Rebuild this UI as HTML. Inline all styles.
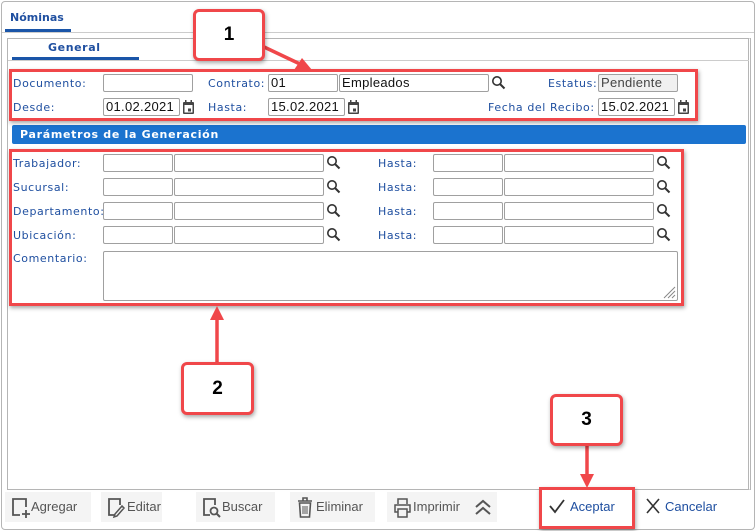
<!DOCTYPE html>
<html><head><meta charset="utf-8"><style>
*{margin:0;padding:0;box-sizing:border-box}
body{width:756px;height:531px;background:#fff;position:relative;overflow:hidden;font-family:"DejaVu Sans","Liberation Sans",sans-serif}
.a{position:absolute}
.l{position:absolute;font-size:11px;color:#1f4fa0;letter-spacing:0.6px;white-space:nowrap;line-height:13px}
.i{position:absolute;border:1px solid #a0a0a0;border-radius:2px;background:#fff;height:18px;font-size:13px;font-family:"Liberation Sans",sans-serif;line-height:16px;padding-left:2px;color:#111;letter-spacing:0.3px}
.r{position:absolute;border:3px solid #f0474a;box-shadow:1px 2px 4px rgba(0,0,0,.35)}
.c{position:absolute;border:3px solid #f0474a;border-radius:6px;background:#fff;box-shadow:1px 2px 4px rgba(0,0,0,.35);font:bold 19px "Liberation Sans",sans-serif;text-align:center;color:#000}
.btn{position:absolute;top:492px;height:30px;background:#f4f4f4;font:13px "Liberation Sans",sans-serif;color:#555;line-height:30px}
.btn svg{position:absolute;left:6px;top:5px}
.btn span{position:absolute;left:26px}
</style></head><body>
<div class="a" style="left:1px;top:1px;width:754px;height:529px;border:1px solid #b5b5b5;border-radius:4px"></div>
<div class="a" style="left:10px;top:11px;font:bold 11px 'DejaVu Sans',sans-serif;color:#1f4fa0">Nóminas</div>
<div class="a" style="left:5px;top:29px;width:66px;height:3px;background:#1a55a8"></div>
<div class="a" style="left:2px;top:32px;width:752px;height:1px;background:#ccc"></div>
<div class="a" style="left:7px;top:38px;width:744px;height:452px;border:1px solid #b5b5b5;border-right:3px double #b5b5b5"></div>
<div class="a" style="left:48px;top:41px;font:bold 11px 'DejaVu Sans',sans-serif;color:#1f4fa0;letter-spacing:0.6px">General</div>
<div class="a" style="left:12px;top:57px;width:127px;height:3px;background:#1a55a8"></div>
<div class="a" style="left:8px;top:60px;width:741px;height:1px;background:#ccc"></div>

<!-- row1 -->
<div class="l" style="left:13px;top:77px">Documento:</div>
<div class="i" style="left:103px;top:74px;width:90px"></div>
<div class="l" style="left:208px;top:77px">Contrato:</div>
<div class="i" style="left:268px;top:74px;width:70px">01</div>
<div class="i" style="left:339px;top:74px;width:150px">Empleados</div>
<svg class="a" style="left:491px;top:75px" width="16" height="16" viewBox="0 0 16 16"><circle cx="6" cy="6" r="4.2" fill="none" stroke="#333" stroke-width="1.6"/><path d="M9 9l4.5 4.5" stroke="#333" stroke-width="2"/></svg>
<div class="l" style="left:548px;top:77px">Estatus:</div>
<div class="i" style="left:598px;top:74px;width:80px;background:#f0f0f0;color:#444">Pendiente</div>
<!-- row2 -->
<div class="l" style="left:13px;top:101px">Desde:</div>
<div class="i" style="left:103px;top:98px;width:77px">01.02.2021</div>
<div class="l" style="left:208px;top:101px">Hasta:</div>
<div class="i" style="left:268px;top:98px;width:77px">15.02.2021</div>
<div class="l" style="left:488px;top:101px">Fecha del Recibo:</div>
<div class="i" style="left:598px;top:98px;width:77px">15.02.2021</div>
<svg class="a" style="left:182px;top:100px" width="13" height="15"><rect x="1" y="2" width="11" height="12" rx="1" fill="#444"/><rect x="2.5" y="5" width="8" height="7.5" fill="#fff"/><rect x="6" y="8.5" width="3" height="3" fill="#444"/><rect x="3" y="0" width="1.5" height="3" fill="#444"/><rect x="8.5" y="0" width="1.5" height="3" fill="#444"/></svg>
<svg class="a" style="left:347px;top:100px" width="13" height="15"><rect x="1" y="2" width="11" height="12" rx="1" fill="#444"/><rect x="2.5" y="5" width="8" height="7.5" fill="#fff"/><rect x="6" y="8.5" width="3" height="3" fill="#444"/><rect x="3" y="0" width="1.5" height="3" fill="#444"/><rect x="8.5" y="0" width="1.5" height="3" fill="#444"/></svg>
<svg class="a" style="left:677px;top:100px" width="13" height="15"><rect x="1" y="2" width="11" height="12" rx="1" fill="#444"/><rect x="2.5" y="5" width="8" height="7.5" fill="#fff"/><rect x="6" y="8.5" width="3" height="3" fill="#444"/><rect x="3" y="0" width="1.5" height="3" fill="#444"/><rect x="8.5" y="0" width="1.5" height="3" fill="#444"/></svg>

<div class="a" style="left:12px;top:125px;width:734px;height:19px;background:#1b73cf;border-radius:2px"></div>
<div class="a" style="left:20px;top:128px;font:bold 11px 'DejaVu Sans',sans-serif;color:#fff;letter-spacing:0.7px">Parámetros de la Generación</div>

<!-- rows -->
<div class="l" style="left:13px;top:157px">Trabajador:</div>
<div class="l" style="left:13px;top:181px">Sucursal:</div>
<div class="l" style="left:13px;top:205px">Departamento:</div>
<div class="l" style="left:13px;top:229px">Ubicación:</div>
<div class="l" style="left:13px;top:252px">Comentario:</div>
<div class="l" style="left:378px;top:157px">Hasta:</div>
<div class="l" style="left:378px;top:181px">Hasta:</div>
<div class="l" style="left:378px;top:205px">Hasta:</div>
<div class="l" style="left:378px;top:229px">Hasta:</div>

<div class="i" style="left:103px;top:154px;width:70px"></div><div class="i" style="left:174px;top:154px;width:150px"></div>
<div class="i" style="left:103px;top:178px;width:70px"></div><div class="i" style="left:174px;top:178px;width:150px"></div>
<div class="i" style="left:103px;top:202px;width:70px"></div><div class="i" style="left:174px;top:202px;width:150px"></div>
<div class="i" style="left:103px;top:226px;width:70px"></div><div class="i" style="left:174px;top:226px;width:150px"></div>
<div class="i" style="left:433px;top:154px;width:70px"></div><div class="i" style="left:504px;top:154px;width:150px"></div>
<div class="i" style="left:433px;top:178px;width:70px"></div><div class="i" style="left:504px;top:178px;width:150px"></div>
<div class="i" style="left:433px;top:202px;width:70px"></div><div class="i" style="left:504px;top:202px;width:150px"></div>
<div class="i" style="left:433px;top:226px;width:70px"></div><div class="i" style="left:504px;top:226px;width:150px"></div>
<svg class="a" style="left:326px;top:155px" width="16" height="16"><circle cx="6" cy="6" r="4.2" fill="none" stroke="#333" stroke-width="1.6"/><path d="M9 9l4.5 4.5" stroke="#333" stroke-width="2"/></svg>
<svg class="a" style="left:326px;top:179px" width="16" height="16"><circle cx="6" cy="6" r="4.2" fill="none" stroke="#333" stroke-width="1.6"/><path d="M9 9l4.5 4.5" stroke="#333" stroke-width="2"/></svg>
<svg class="a" style="left:326px;top:203px" width="16" height="16"><circle cx="6" cy="6" r="4.2" fill="none" stroke="#333" stroke-width="1.6"/><path d="M9 9l4.5 4.5" stroke="#333" stroke-width="2"/></svg>
<svg class="a" style="left:326px;top:227px" width="16" height="16"><circle cx="6" cy="6" r="4.2" fill="none" stroke="#333" stroke-width="1.6"/><path d="M9 9l4.5 4.5" stroke="#333" stroke-width="2"/></svg>
<svg class="a" style="left:656px;top:155px" width="16" height="16"><circle cx="6" cy="6" r="4.2" fill="none" stroke="#333" stroke-width="1.6"/><path d="M9 9l4.5 4.5" stroke="#333" stroke-width="2"/></svg>
<svg class="a" style="left:656px;top:179px" width="16" height="16"><circle cx="6" cy="6" r="4.2" fill="none" stroke="#333" stroke-width="1.6"/><path d="M9 9l4.5 4.5" stroke="#333" stroke-width="2"/></svg>
<svg class="a" style="left:656px;top:203px" width="16" height="16"><circle cx="6" cy="6" r="4.2" fill="none" stroke="#333" stroke-width="1.6"/><path d="M9 9l4.5 4.5" stroke="#333" stroke-width="2"/></svg>
<svg class="a" style="left:656px;top:227px" width="16" height="16"><circle cx="6" cy="6" r="4.2" fill="none" stroke="#333" stroke-width="1.6"/><path d="M9 9l4.5 4.5" stroke="#333" stroke-width="2"/></svg>
<div class="i" style="left:103px;top:251px;width:575px;height:50px"></div>
<svg class="a" style="left:662px;top:285px" width="14" height="14"><path d="M13 2L2 13M13 6L6 13M13 10L10 13" stroke="#888" stroke-width="1"/></svg>

<!-- red boxes -->
<div class="r" style="left:9px;top:69px;width:689px;height:52px"></div>
<div class="r" style="left:9px;top:149px;width:675px;height:157px"></div>
<div class="r" style="left:539px;top:487px;width:96px;height:42px"></div>

<!-- callouts -->
<svg class="a" style="left:0;top:0" width="756" height="531">
<path d="M262 46L300 64" stroke="#f0474a" stroke-width="3.5"/><path d="M312 70L294 70L302 58Z" fill="#f0474a"/>
<path d="M217 362L217 318" stroke="#f0474a" stroke-width="3.5"/><path d="M217 306L210 320L224 320Z" fill="#f0474a"/>
<path d="M587 445L587 476" stroke="#f0474a" stroke-width="3.5"/><path d="M587 488L580 474L594 474Z" fill="#f0474a"/>
</svg>
<div class="c" style="left:193px;top:9px;width:72px;height:52px;line-height:46px">1</div>
<div class="c" style="left:181px;top:362px;width:73px;height:53px;line-height:47px">2</div>
<div class="c" style="left:550px;top:394px;width:73px;height:52px;line-height:46px">3</div>

<!-- toolbar -->
<div class="btn" style="left:5px;width:86px"><svg width="20" height="22"><path d="M9 18H2V2h13v8" fill="none" stroke="#555" stroke-width="1.8"/><path d="M11 17h8M15 13v8" stroke="#555" stroke-width="1.8"/></svg><span>Agregar</span></div>
<div class="btn" style="left:101px;width:61px"><svg width="20" height="22"><path d="M8 18H2V2h11v6" fill="none" stroke="#555" stroke-width="1.8"/><path d="M15 9L8 17l-1 3 3-1 7-8z" fill="none" stroke="#555" stroke-width="1.5"/></svg><span>Editar</span></div>
<div class="btn" style="left:196px;width:79px"><svg width="20" height="22"><path d="M8 18H2V2h11v6" fill="none" stroke="#555" stroke-width="1.8"/><circle cx="12" cy="14" r="3.5" fill="none" stroke="#555" stroke-width="1.8"/><path d="M14.5 16.5L18 20" stroke="#555" stroke-width="2"/></svg><span>Buscar</span></div>
<div class="btn" style="left:290px;width:85px"><svg width="20" height="22"><path d="M2 4h14M7 4V1h4v3" fill="none" stroke="#555" stroke-width="1.6"/><path d="M3.5 6h11l-1 14h-9z" fill="none" stroke="#555" stroke-width="1.6"/><path d="M7 9v8M9 9v8M11 9v8" stroke="#555"/></svg><span>Eliminar</span></div>
<div class="btn" style="left:387px;width:110px"><svg width="20" height="22"><path d="M5 7V2h9v5M5 15H2V8h15v7h-3M5 12h9v8H5z" fill="none" stroke="#555" stroke-width="1.5"/></svg><span>Imprimir</span><svg style="left:86px;top:6px" width="20" height="18"><path d="M3 9l7-6 7 6M3 16l7-6 7 6" fill="none" stroke="#555" stroke-width="2"/></svg></div>
<div class="a" style="left:548px;top:498px;font:13px 'Liberation Sans',sans-serif;color:#1f4fa0"><svg style="vertical-align:-3px;margin-right:4px" width="18" height="16"><path d="M2 8l5 6 9-12" fill="none" stroke="#333" stroke-width="1.8"/></svg>Aceptar</div>
<div class="a" style="left:645px;top:498px;font:13px 'Liberation Sans',sans-serif;color:#1f4fa0"><svg style="vertical-align:-3px;margin-right:4px" width="16" height="16"><path d="M2 1l12 14M14 1L2 15" stroke="#333" stroke-width="1.6"/></svg>Cancelar</div>
</body></html>
